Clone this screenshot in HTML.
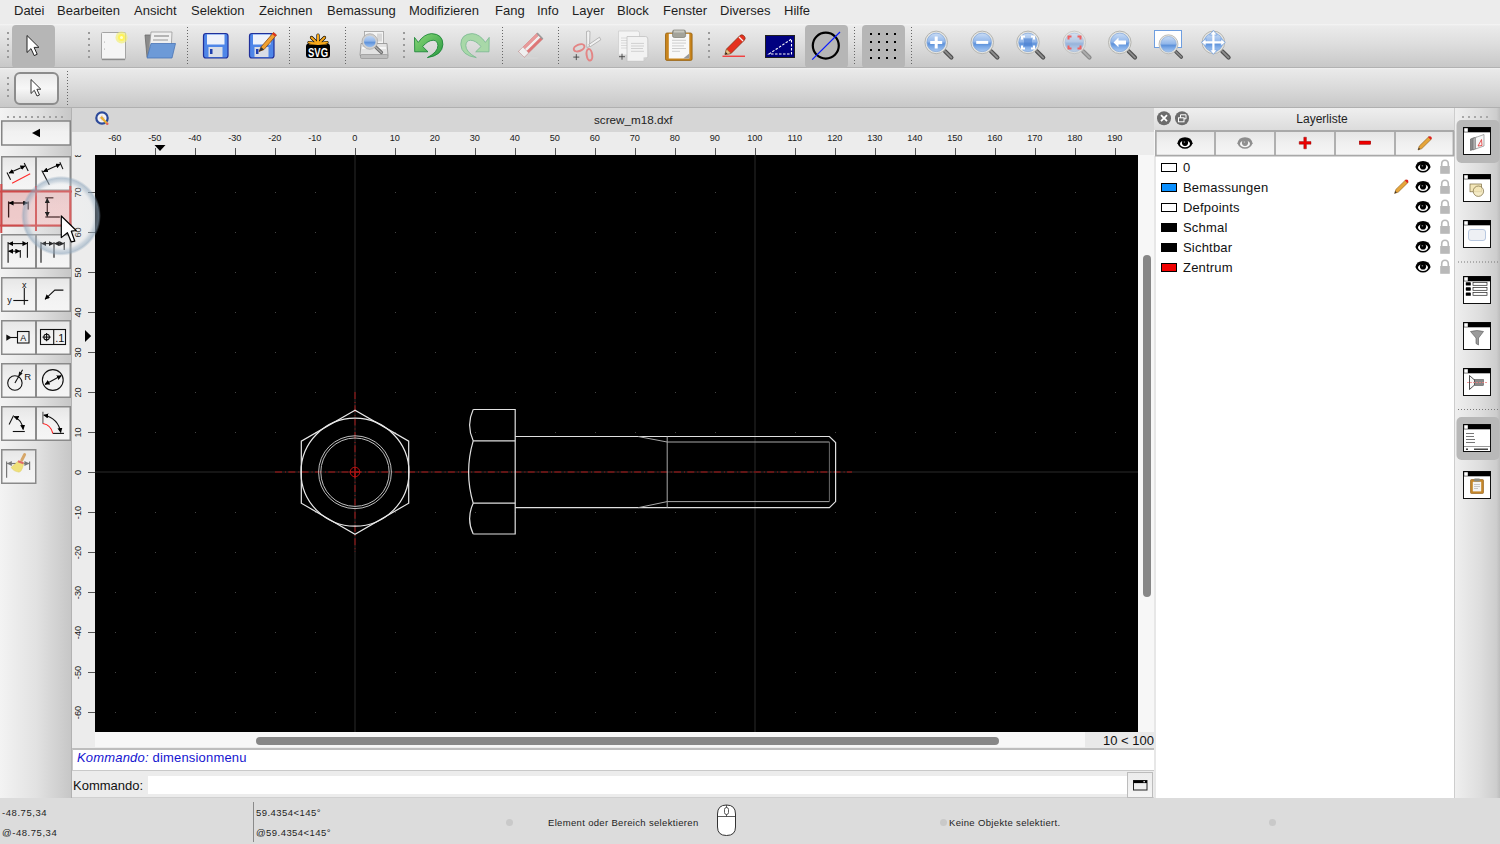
<!DOCTYPE html>
<html><head><meta charset="utf-8">
<style>
*{margin:0;padding:0;box-sizing:border-box}
html,body{width:1500px;height:844px;overflow:hidden;background:#ececec;font-family:"Liberation Sans",sans-serif;color:#222}
.a{position:absolute}
#menu{left:0;top:0;width:1500px;height:24px;background:#ececec}
#menu span{position:absolute;top:3px;font-size:13px;color:#1e1e1e;white-space:nowrap}
#tb1{left:0;top:24px;width:1500px;height:44px;background:linear-gradient(#f5f5f5 0,#ebebeb 2px,#dedede 45%,#c8c8c8);border-bottom:1px solid #b2b2b2}
#tb2{left:0;top:68px;width:1500px;height:40px;background:linear-gradient(#f2f2f2 0,#e9e9e9 2px,#dcdcdc 45%,#c8c8c8);border-bottom:1px solid #b0b0b0}
#lp{left:0;top:108px;width:72px;height:691px;background:linear-gradient(90deg,#f3f3f3,#dedede 60%,#c9c9c9);border-right:1px solid #b4b4b4}
#doctitle{left:72px;top:108px;width:1082px;height:24px;background:#d6d6d6;font-size:12px;text-align:center}
#hruler{left:72px;top:132px;width:1082px;height:23px;background:#ececec}
#vruler{left:72px;top:155px;width:23px;height:592px;background:#ececec}
#canvas{left:95px;top:155px;width:1043px;height:577px;background:#000;overflow:hidden}
#vscroll{left:1138px;top:155px;width:16px;height:577px;background:#f7f7f7}
#hscroll{left:95px;top:732px;width:990px;height:15px;background:#f7f7f7}
#zoomlbl{left:1085px;top:732px;width:69px;height:16px;background:#e9e9e9;font-size:13px;text-align:right;color:#111}
#cmdhist{left:72px;top:748px;width:1082px;height:23px;background:#fff;border:1px solid #c9c9c9;border-top:2px solid #bdbdbd;border-right:none}
#cmdin{left:72px;top:771px;width:1082px;height:28px;background:#ececec;border-bottom:2px solid #d0d0d0}
#layer{left:1154px;top:108px;width:301px;height:691px;background:#fff;border-left:1px solid #c9c9c9;border-right:1px solid #c9c9c9}
#dock{left:1455px;top:108px;width:45px;height:691px;background:linear-gradient(90deg,#eeeeee,#dcdcdc 60%,#c4c4c4)}
#status{left:0;top:798px;width:1500px;height:46px;background:#dcdcdc}
.st{position:absolute;font-size:9.5px;color:#1e1e1e;white-space:nowrap;letter-spacing:0.45px}
</style></head><body>
<div id="menu" class="a">
<span style="left:14px">Datei</span><span style="left:57px">Bearbeiten</span><span style="left:134px">Ansicht</span><span style="left:191px">Selektion</span><span style="left:259px">Zeichnen</span><span style="left:327px">Bemassung</span><span style="left:409px">Modifizieren</span><span style="left:495px">Fang</span><span style="left:537px">Info</span><span style="left:572px">Layer</span><span style="left:617px">Block</span><span style="left:663px">Fenster</span><span style="left:720px">Diverses</span><span style="left:784px">Hilfe</span>
</div>
<div id="tb1" class="a"></div>
<div id="tb2" class="a"></div>
<svg class="a" style="left:0;top:0" width="1500" height="108" viewBox="0 0 1500 108">
<defs>
<linearGradient id="gBlue" x1="0" y1="0" x2="0" y2="1"><stop offset="0" stop-color="#9cc0f0"/><stop offset="0.5" stop-color="#5a8fdc"/><stop offset="1" stop-color="#8ab4ec"/></linearGradient>
<linearGradient id="gMag" x1="0" y1="0" x2="0" y2="1"><stop offset="0" stop-color="#c9dcf5"/><stop offset="0.45" stop-color="#94b8ea"/><stop offset="0.58" stop-color="#5e92da"/><stop offset="0.72" stop-color="#7aa8e6"/><stop offset="1" stop-color="#a8c8f0"/></linearGradient>
<radialGradient id="gMagL" cx="0.5" cy="0.35" r="0.6"><stop offset="0" stop-color="#d6e3f5"/><stop offset="1" stop-color="#a9c3e8"/></radialGradient>
<linearGradient id="gGreen" x1="0" y1="0" x2="0" y2="1"><stop offset="0" stop-color="#6fd06f"/><stop offset="1" stop-color="#1f8f2f"/></linearGradient>
<linearGradient id="gBtn2" x1="0" y1="0" x2="0" y2="1"><stop offset="0" stop-color="#e9e9e9"/><stop offset="0.5" stop-color="#f7f7f7"/><stop offset="1" stop-color="#dadada"/></linearGradient>
<g id="mag">
 <ellipse cx="6" cy="13.5" rx="9" ry="2" fill="#cfcfcf" opacity="0.6"/>
 <path d="M8.8 8.8 L15.2 15.2" stroke="#505050" stroke-width="4.2" stroke-linecap="round"/>
 <path d="M8.8 8.8 L15.2 15.2" stroke="#8e8e8e" stroke-width="1.8" stroke-linecap="round"/>
 <circle cx="0" cy="0" r="11.3" fill="#e6e6e2" stroke="#b4b4b0" stroke-width="1"/>
 <circle cx="0" cy="0" r="9.3" fill="url(#gMag)" stroke="#7ea4d8" stroke-width="0.7"/>
</g>
<g id="grip"><rect x="0" y="0" width="2" height="2"/><rect x="0" y="6" width="2" height="2"/><rect x="0" y="12" width="2" height="2"/><rect x="0" y="18" width="2" height="2"/><rect x="0" y="24" width="2" height="2"/></g>
</defs>
<!-- grips -->
<g fill="#9a9a9a">
<use href="#grip" x="7" y="32"/>
<use href="#grip" x="88" y="32"/>
<use href="#grip" x="403" y="32"/>
<use href="#grip" x="708" y="32"/>
</g>
<g fill="#9a9a9a"><rect x="7" y="77" width="2" height="2"/><rect x="7" y="83" width="2" height="2"/><rect x="7" y="89" width="2" height="2"/><rect x="7" y="95" width="2" height="2"/></g>
<!-- dotted separators -->
<g stroke="#666" stroke-width="1" stroke-dasharray="1 2">
<line x1="187.5" y1="27" x2="187.5" y2="66"/>
<line x1="289.5" y1="27" x2="289.5" y2="66"/>
<line x1="345.5" y1="27" x2="345.5" y2="66"/>
<line x1="502.5" y1="27" x2="502.5" y2="66"/>
<line x1="558.5" y1="27" x2="558.5" y2="66"/>
<line x1="854.5" y1="27" x2="854.5" y2="66"/>
<line x1="911.5" y1="27" x2="911.5" y2="66"/>
<line x1="67.5" y1="71" x2="67.5" y2="105"/>
</g>
<!-- selected select button -->
<rect x="12" y="25" width="43" height="43" rx="4" fill="#b6b6b6"/>
<path d="M27 35.5 L27 52.5 L31 48.6 L34.2 55.6 L37.2 54.3 L34.1 47.4 L38.9 47.3 Z" fill="#fff" stroke="#222" stroke-width="1" stroke-linejoin="round"/>
<!-- tb2 select button -->
<rect x="15" y="73" width="43" height="31" rx="5" fill="url(#gBtn2)" stroke="#8c8c8c" stroke-width="2"/>
<path d="M31 79.5 L31 93.5 L34.3 90.3 L37 96 L39.5 95 L36.9 89.3 L40.8 89.2 Z" fill="#fff" stroke="#333" stroke-width="1" stroke-linejoin="round"/>
<!-- new doc -->
<rect x="101.5" y="32.5" width="24" height="27" rx="1" fill="#f5f5f5" stroke="#a4a4a4" stroke-width="1"/>
<rect x="102" y="58.6" width="23" height="1.6" fill="#8c8c8c"/>
<circle cx="104.5" cy="42" r="0.5" fill="#999"/><circle cx="104.5" cy="49" r="0.5" fill="#999"/>
<circle cx="121.5" cy="37.5" r="6" fill="#f2f07a" opacity="0.7"/>
<circle cx="121.5" cy="37.5" r="3.5" fill="#fff35a"/>
<circle cx="121.5" cy="37.5" r="1.5" fill="#ffffd0"/>
<!-- open folder -->
<path d="M145 35 L156 35 L158 37 L170 37 L170 57 L147 57 Z" fill="#8a8a8a" stroke="#6a6a6a" stroke-width="0.8"/>
<path d="M151 32 L172 32 L171 52 L149 52 Z" fill="#f0f0f0" stroke="#9a9a9a" stroke-width="0.8"/>
<rect x="154" y="35" width="15" height="2" fill="#b4b4b4"/>
<rect x="153" y="39" width="15" height="2" fill="#c4c4c4"/>
<path d="M151 43.5 L175.5 43.5 L172 58 L147 58 Z" fill="#6d9ad7" stroke="#4a75b5" stroke-width="0.8"/>
<!-- save -->
<rect x="203.5" y="33.5" width="24.5" height="24.5" rx="2.5" fill="#4f86e8" stroke="#1f2f9a" stroke-width="1.2"/>
<rect x="207" y="34.5" width="17.5" height="10" fill="#eef2fb"/>
<rect x="208.5" y="47" width="14" height="10" fill="#d9dde6"/>
<rect x="210" y="49" width="2.5" height="5" fill="#1f3fae"/>
<!-- save as -->
<rect x="249.5" y="33.5" width="24.5" height="24.5" rx="2.5" fill="#4f86e8" stroke="#1f2f9a" stroke-width="1.2"/>
<rect x="253" y="34.5" width="17.5" height="10" fill="#eef2fb"/>
<rect x="254.5" y="47" width="14" height="10" fill="#d9dde6"/>
<rect x="256" y="49" width="2.5" height="5" fill="#1f3fae"/>
<path d="M259 51.5 L261 47 L273.5 32.5 L276.5 35 L264 49.5 Z" fill="#f0a030" stroke="#8a4a10" stroke-width="0.8"/>
<path d="M272 34 L273.5 32.5 L276.5 35 L275 36.5 Z" fill="#e03020"/>
<path d="M259 51.5 L261 47 L264 49.5 Z" fill="#333"/>
<!-- SVG -->
<rect x="306" y="43.5" width="24" height="14.5" rx="3" fill="#000"/>
<g stroke="#000" stroke-width="3.2" stroke-linecap="round"><line x1="318" y1="44" x2="318" y2="35"/><line x1="318" y1="44" x2="311.5" y2="37.5"/><line x1="318" y1="44" x2="324.5" y2="37.5"/><line x1="318" y1="44" x2="309" y2="42.5"/><line x1="318" y1="44" x2="327" y2="42.5"/></g>
<g stroke="#f7a81b" stroke-width="2" stroke-linecap="round"><line x1="318" y1="44" x2="318" y2="35"/><line x1="318" y1="44" x2="311.5" y2="37.5"/><line x1="318" y1="44" x2="324.5" y2="37.5"/><line x1="318" y1="44" x2="309" y2="42.5"/><line x1="318" y1="44" x2="327" y2="42.5"/></g>
<path d="M308.5 44.5 Q318 39 327.5 44.5 Z" fill="#f7a81b"/>
<text x="318" y="56.6" font-family="Liberation Sans" font-weight="bold" font-size="12.5" fill="#fff" text-anchor="middle" textLength="20" lengthAdjust="spacingAndGlyphs">SVG</text>
<!-- print preview -->
<rect x="364.5" y="31.5" width="19" height="15" fill="#f4f4f4" stroke="#a0a0a0" stroke-width="0.8"/>
<rect x="377" y="33.5" width="5" height="8" fill="#d8d8d8"/>
<path d="M361 43.5 L387 43.5 L388 55.5 L360 55.5 Z" fill="#e2e2e2" stroke="#8e8e8e" stroke-width="0.8"/>
<rect x="362" y="47" width="24" height="2" fill="#f6f6f6"/>
<rect x="360.5" y="54.5" width="27.5" height="4" rx="1.2" fill="#bdbdbd" stroke="#8a8a8a" stroke-width="0.6"/>
<path d="M374 45.5 L381.5 52.5" stroke="#6a6a6a" stroke-width="3.2" stroke-linecap="round"/>
<path d="M374 45.5 L381.5 52.5" stroke="#a8a8a8" stroke-width="1.4" stroke-linecap="round"/>
<circle cx="369.8" cy="41.5" r="6.8" fill="url(#gMag)" stroke="#cfcfcf" stroke-width="2"/>
<circle cx="369.8" cy="41.5" r="7.8" fill="none" stroke="#9a9a9a" stroke-width="0.6"/>
<!-- undo -->
<linearGradient id="gUndo" x1="0" y1="0" x2="1" y2="1"><stop offset="0" stop-color="#8ad878"/><stop offset="1" stop-color="#2a9a40"/></linearGradient>
<path d="M414.5 37.4 L418.3 42.4 Q424 34 431.5 33.6 Q442.9 34 442.9 44.5 Q442.3 55.5 427.4 57.6 Q437.9 52 437.9 45.6 Q437.5 40.3 433.2 40.3 Q428 40.3 422.7 46.5 L428 51.8 L414.7 51.8 Z" fill="url(#gUndo)" stroke="#128030" stroke-width="0.8" stroke-linejoin="round"/>
<!-- redo -->
<path d="M 489.2 37.4 L 485.4 42.4 Q 479.7 34.0 472.2 33.6 Q 460.8 34.0 460.8 44.5 Q 461.4 55.5 476.3 57.6 Q 465.8 52.0 465.8 45.6 Q 466.2 40.3 470.5 40.3 Q 475.7 40.3 481.0 46.5 L 475.7 51.8 L 489.0 51.8 Z" fill="#a8d8a8" stroke="#78b890" stroke-width="0.8" stroke-linejoin="round"/>
<!-- eraser -->
<ellipse cx="529" cy="57.8" rx="10" ry="1.3" fill="#d4d4d4"/>
<g transform="translate(518.5 51.4) rotate(-44.5)">
<rect x="0" y="0" width="26" height="8.2" fill="#de7676" stroke="#c86a6a" stroke-width="0.4"/>
<rect x="6" y="0" width="20" height="2.6" fill="#e89a9a"/>
<rect x="6" y="2.8" width="20" height="2.6" fill="#f0efef"/>
<rect x="0" y="0" width="6.2" height="8.2" fill="#efefef" stroke="#b09090" stroke-width="0.5" stroke-dasharray="0.8 0.6"/>
<rect x="25.2" y="0" width="1.6" height="8.2" fill="#9a9a9a"/>
</g>
<!-- scissors -->
<path d="M586.5 31.5 Q588.5 30.5 590 31.5 L589.5 46.5 L586.8 47.5 Z" fill="#f2f2f2" stroke="#a0a0a0" stroke-width="0.7"/>
<path d="M599.5 37.2 L600.8 39.8 L590.5 46.5 L588.5 44.8 Z" fill="#f2f2f2" stroke="#a0a0a0" stroke-width="0.7"/>
<ellipse cx="579.1" cy="47.8" rx="5.6" ry="3.2" transform="rotate(-22 579.1 47.8)" fill="none" stroke="#e38585" stroke-width="2"/>
<ellipse cx="589.4" cy="54.8" rx="2.8" ry="5.8" transform="rotate(-8 589.4 54.8)" fill="none" stroke="#e38585" stroke-width="2"/>
<path d="M573.3 57.1 h6 M576.3 54.1 v6" stroke="#444" stroke-width="0.9"/>
<!-- copy -->
<path d="M618.5 31 L637.5 31 Q639.5 31 639.5 33 L639.5 55 L618.5 55 Z" fill="#f4f4f4" stroke="#cfcfcf" stroke-width="0.8"/>
<g stroke="#d6d6d6" stroke-width="0.9"><line x1="621" y1="38" x2="627" y2="38"/><line x1="621" y1="40.5" x2="627" y2="40.5"/><line x1="621" y1="43" x2="627" y2="43"/><line x1="621" y1="45.5" x2="627" y2="45.5"/><line x1="621" y1="48" x2="627" y2="48"/></g>
<path d="M627 36.5 L645.5 36.5 Q647.8 36.5 647.8 39 L647.8 57 L643.5 61.3 L627 61.3 Z" fill="#f2f2f2" stroke="#c2c2c2" stroke-width="0.8"/>
<path d="M643.5 61.3 L643.5 57.5 L647.8 57 Z" fill="#cfcfcf"/>
<g stroke="#d0d0d0" stroke-width="1"><line x1="631" y1="43.4" x2="644" y2="43.4"/><line x1="631" y1="46" x2="644" y2="46"/><line x1="631" y1="48.5" x2="643" y2="48.5"/><line x1="631" y1="51.3" x2="644" y2="51.3"/></g>
<path d="M619 56.7 h6 M622 53.7 v6" stroke="#444" stroke-width="0.9"/>
<!-- paste -->
<rect x="665.5" y="33" width="26.6" height="27.4" rx="1.5" fill="#c8841c" stroke="#94600e" stroke-width="0.8"/>
<rect x="668.8" y="33.8" width="20.5" height="24.7" fill="#f8f8f8"/>
<rect x="672.5" y="30" width="13.1" height="7.5" rx="1.8" fill="#a3a39a" stroke="#6e6e64" stroke-width="0.6"/>
<rect x="674" y="30.5" width="10" height="2" fill="#c8c8c0"/>
<g stroke="#c8c8c8" stroke-width="0.9"><line x1="672" y1="40.3" x2="686" y2="40.3"/><line x1="672" y1="43.1" x2="686" y2="43.1"/><line x1="672" y1="45.9" x2="684" y2="45.9"/><line x1="672" y1="48.5" x2="686" y2="48.5"/><line x1="672" y1="51.3" x2="680" y2="51.3"/></g>
<path d="M683.2 58.5 L689.3 58.5 L689.3 53.4 Z" fill="#9a9a9a"/>
<!-- pencil -->
<line x1="722.5" y1="56.2" x2="745" y2="56.2" stroke="#f00" stroke-width="1"/>
<path d="M725 54.5 L726.5 49 L740 35.5 Q742 34 743.5 35.5 L744.5 36.5 Q746 38 744.5 40 L731 53.5 Z" fill="#e5311f" stroke="#7a2a10" stroke-width="0.7"/>
<path d="M739 37 L743 41" stroke="#f4f4f4" stroke-width="1.2"/>
<path d="M725 54.5 L726.5 49 L731 53.5 Z" fill="#e9c48a" stroke="#7a5a20" stroke-width="0.5"/>
<path d="M725 54.5 L725.8 52 L727.5 53.7 Z" fill="#222"/>
<!-- blue rect -->
<rect x="765.5" y="35.5" width="29" height="22" fill="#000080" stroke="#202020" stroke-width="1"/>
<path d="M769 54 L791.5 39 L791.5 54 Z" fill="none" stroke="#fff" stroke-width="1.1" stroke-dasharray="2.5 1.5"/>
<!-- circle selected -->
<rect x="805" y="25" width="43" height="43" rx="4" fill="#b6b6b6"/>
<circle cx="825.8" cy="45.6" r="13" fill="none" stroke="#000" stroke-width="2.2"/>
<line x1="812.2" y1="59.6" x2="840" y2="32" stroke="#0a1aff" stroke-width="1.2"/>
<!-- grid selected -->
<rect x="862" y="25" width="43" height="43" rx="4" fill="#b6b6b6"/>
<g fill="#000">
<rect x="870" y="33" width="2" height="2"/><rect x="878" y="33" width="2" height="2"/><rect x="886" y="33" width="2" height="2"/><rect x="894" y="33" width="2" height="2"/>
<rect x="870" y="41" width="2" height="2"/><rect x="878" y="41" width="2" height="2"/><rect x="886" y="41" width="2" height="2"/><rect x="894" y="41" width="2" height="2"/>
<rect x="870" y="49" width="2" height="2"/><rect x="878" y="49" width="2" height="2"/><rect x="886" y="49" width="2" height="2"/><rect x="894" y="49" width="2" height="2"/>
<rect x="870" y="57" width="2" height="2"/><rect x="878" y="57" width="2" height="2"/><rect x="886" y="57" width="2" height="2"/><rect x="894" y="57" width="2" height="2"/>
</g>
<!-- zoom in -->
<use href="#mag" x="936.2" y="42.4"/>
<path d="M936.2 36.5 v12 M930.2 42.4 h12" stroke="#fff" stroke-width="3"/>
<!-- zoom out -->
<use href="#mag" x="982.2" y="42.4"/>
<path d="M976.2 42.4 h12" stroke="#fff" stroke-width="3"/>
<!-- zoom auto -->
<use href="#mag" x="1028" y="42.4"/>
<rect x="1024" y="38.4" width="8" height="8" fill="#4a7fd0" opacity="0.6"/><path d="M1022 39.5 v-3 h3 M1031 36.5 h3 v3 M1034 45.5 v3 h-3 M1025 48.5 h-3 v-3" fill="none" stroke="#fff" stroke-width="2"/>
<!-- zoom prev -->
<g opacity="0.55"><use href="#mag" x="1074.3" y="42.4"/></g>
<path d="M1068.5 39.5 v-3 h3 M1077.5 36.5 h3 v3 M1080.5 45.5 v3 h-3 M1071.5 48.5 h-3 v-3" fill="none" stroke="#f06060" stroke-width="2"/>
<!-- zoom back -->
<use href="#mag" x="1119.8" y="42.4"/>
<path d="M1113.5 42.4 L1118.5 37.5 L1118.5 40.4 L1126 40.4 L1126 44.4 L1118.5 44.4 L1118.5 47.3 Z" fill="#fff"/>
<!-- zoom window -->
<rect x="1154.5" y="30.5" width="27" height="17" fill="#fff" stroke="#6e9ee0" stroke-width="1"/>
<g transform="translate(1168.5 44.3) scale(0.84)"><use href="#mag"/></g>
<!-- pan -->
<use href="#mag" x="1213.4" y="42.4"/>
<path d="M1213.4 30.5 L1209.5 35 L1217.3 35 Z M1213.4 54.3 L1209.5 49.8 L1217.3 49.8 Z M1201.5 42.4 L1206 38.5 L1206 46.3 Z M1225.3 42.4 L1220.8 38.5 L1220.8 46.3 Z" fill="#fff" stroke="#6e9ee0" stroke-width="0.8"/>
<path d="M1213.4 34 v17 M1205 42.4 h17" stroke="#fff" stroke-width="2.2"/>
</svg>

<svg class="a" style="left:0;top:108px" width="72" height="691" viewBox="0 108 72 691">
<defs>
<linearGradient id="gLP" x1="0" y1="0" x2="1" y2="0"><stop offset="0" stop-color="#f3f3f3"/><stop offset="0.5" stop-color="#e2e2e2"/><stop offset="1" stop-color="#c6c6c6"/></linearGradient>
<linearGradient id="gLB" x1="0" y1="0" x2="0" y2="1"><stop offset="0" stop-color="#e6e6e6"/><stop offset="0.45" stop-color="#f1f1f1"/><stop offset="1" stop-color="#f5f5f5"/></linearGradient>
<marker id="ar" viewBox="0 0 6 6" refX="5.5" refY="3" markerWidth="5" markerHeight="5" orient="auto-start-reverse" markerUnits="userSpaceOnUse"><path d="M0 0 L6 3 L0 6 Z" fill="#000"/></marker>
<marker id="arG" viewBox="0 0 6 6" refX="5.5" refY="3" markerWidth="5" markerHeight="5" orient="auto-start-reverse" markerUnits="userSpaceOnUse"><path d="M0 0 L6 3 L0 6 Z" fill="#777"/></marker>
</defs>
<rect x="0" y="108" width="72" height="691" fill="url(#gLP)"/>
<rect x="71" y="108" width="1" height="691" fill="#b2b2b2"/>
<g fill="#a0a0a0">
<rect x="7" y="116" width="2" height="2"/><rect x="13" y="116" width="2" height="2"/><rect x="19" y="116" width="2" height="2"/><rect x="25" y="116" width="2" height="2"/><rect x="31" y="116" width="2" height="2"/><rect x="37" y="116" width="2" height="2"/><rect x="43" y="116" width="2" height="2"/><rect x="49" y="116" width="2" height="2"/><rect x="55" y="116" width="2" height="2"/><rect x="61" y="116" width="2" height="2"/>
</g>
<!-- back button -->
<rect x="1.75" y="121" width="68.5" height="24" fill="url(#gLB)" stroke="#858585" stroke-width="1.5"/>
<path d="M32 133 L40 128.8 L40 137.2 Z" fill="#000"/>
<!-- buttons -->
<g fill="url(#gLB)" stroke="#8a8a8a" stroke-width="1.5">
<rect x="1.75" y="156.75" width="34" height="33.5"/><rect x="36.25" y="156.75" width="34" height="33.5"/>
<rect x="1.75" y="190.75" width="34" height="35"/><rect x="36.25" y="190.75" width="34" height="35"/>
<rect x="1.75" y="234.75" width="34" height="33.5"/><rect x="36.25" y="234.75" width="34" height="33.5"/>
<rect x="1.75" y="277.75" width="34" height="33.5"/><rect x="36.25" y="277.75" width="34" height="33.5"/>
<rect x="1.75" y="320.75" width="34" height="33.5"/><rect x="36.25" y="320.75" width="34" height="33.5"/>
<rect x="1.75" y="363.75" width="34" height="33.5"/><rect x="36.25" y="363.75" width="34" height="33.5"/>
<rect x="1.75" y="406.75" width="34" height="33.5"/><rect x="36.25" y="406.75" width="34" height="33.5"/>
<rect x="1.75" y="449.75" width="34" height="33.5"/>
</g>
<!-- highlighted row overlay -->
<rect x="0" y="190.5" width="72" height="36" fill="#e88a8a" opacity="0.38"/>
<g stroke="#cf4a4a" stroke-width="2" fill="none">
<line x1="0" y1="191.5" x2="72" y2="191.5"/><line x1="0" y1="225.5" x2="72" y2="225.5"/>
<line x1="36" y1="186" x2="36" y2="231"/><line x1="70.3" y1="186" x2="70.3" y2="231"/><line x1="1.3" y1="184" x2="1.3" y2="233"/>
</g>
<!-- icons -->
<g stroke="#111" stroke-width="1.1" fill="none">
<!-- row1 btn1 aligned -->
<line x1="9" y1="173" x2="25" y2="166" marker-start="url(#ar)" marker-end="url(#ar)"/>
<line x1="7" y1="172.5" x2="10.6" y2="179.7"/><line x1="24.2" y1="163.1" x2="28.2" y2="171.1"/>
<!-- row1 btn2 -->
<line x1="43.3" y1="171.7" x2="60.4" y2="164.1" marker-start="url(#ar)" marker-end="url(#ar)"/>
<line x1="41.8" y1="170.6" x2="49.3" y2="184.7"/><line x1="59.9" y1="162.1" x2="62.9" y2="169.1"/>
</g>
<line x1="12.1" y1="183.2" x2="30.2" y2="173.7" stroke="#ff2a2a" stroke-width="1.1"/>
<g stroke="#3a1a1a" stroke-width="1.3" fill="none">
<!-- row2 btn1 horizontal -->
<line x1="8.6" y1="201.4" x2="8.6" y2="217.5"/><line x1="28.2" y1="201.4" x2="28.2" y2="209.4"/>
<line x1="9" y1="203" x2="27.8" y2="203" marker-start="url(#ar)" marker-end="url(#ar)"/>
<!-- row2 btn2 vertical -->
<line x1="45.3" y1="197.8" x2="53.4" y2="197.8"/><line x1="45.3" y1="217" x2="59.9" y2="217"/>
<line x1="47.3" y1="198.3" x2="47.3" y2="216.5" marker-start="url(#ar)" marker-end="url(#ar)"/>
</g>
<g stroke="#111" stroke-width="1.1" fill="none">
<!-- row3 btn1 baseline -->
<line x1="8.1" y1="242" x2="8.1" y2="262.7"/><line x1="27.4" y1="242" x2="27.4" y2="257.7"/><line x1="20.3" y1="250" x2="20.3" y2="257.7"/>
<line x1="8.5" y1="243.6" x2="27" y2="243.6" marker-start="url(#ar)" marker-end="url(#ar)"/>
<line x1="8.5" y1="251.2" x2="19.9" y2="251.2" marker-start="url(#ar)" marker-end="url(#ar)"/>
<!-- row3 btn2 continue -->
<line x1="41" y1="242" x2="41" y2="262.7"/><line x1="54" y1="242" x2="54" y2="257.7"/><line x1="64.2" y1="242" x2="64.2" y2="250"/>
<line x1="41.5" y1="243.6" x2="53.5" y2="243.6" marker-start="url(#ar)" marker-end="url(#ar)"/>
<line x1="54.5" y1="243.6" x2="63.8" y2="243.6" marker-start="url(#ar)" marker-end="url(#ar)"/>
<!-- row4 btn1 ordinate -->
<line x1="24.3" y1="288" x2="24.3" y2="304.7"/><line x1="13.3" y1="300.5" x2="28.2" y2="300.5"/>
<!-- row4 btn2 leader -->
<polyline points="63.4,290.1 54.8,290.1 45,299.3" marker-end="url(#ar)"/>
<!-- row5 btn1 -->
<line x1="11" y1="337.5" x2="17.2" y2="337.5"/>
<rect x="17.5" y="331.5" width="11.5" height="11.5"/>
<!-- row5 btn2 -->
<rect x="40.5" y="329.5" width="25" height="15"/><line x1="53.7" y1="329.5" x2="53.7" y2="344.5"/>
<circle cx="46.6" cy="337.1" r="2.8"/><line x1="42.5" y1="337.1" x2="50.7" y2="337.1"/><line x1="46.6" y1="333" x2="46.6" y2="341.2"/>
<!-- row6 btn1 radius -->
<circle cx="14.9" cy="383" r="7.2"/>
<line x1="14.9" y1="383" x2="22.6" y2="369.8"/>
<!-- row6 btn2 diameter -->
<circle cx="52.8" cy="380" r="10.4"/>
<line x1="45" y1="384.4" x2="61.4" y2="375.6" marker-start="url(#ar)" marker-end="url(#ar)"/>
<!-- row7 btn1 angular -->
<line x1="9.1" y1="424.6" x2="13.6" y2="415.5"/><line x1="12.8" y1="431.5" x2="24.8" y2="431.5"/>
<path d="M14 416.5 Q22 420 23.2 429.5" marker-start="url(#ar)" marker-end="url(#ar)"/>
<!-- row7 btn2 arc length -->
<path d="M43.6 415 Q58 418 60.8 432.5" marker-start="url(#ar)" marker-end="url(#ar)"/>
<line x1="52.8" y1="433.4" x2="64" y2="433.4"/>
</g>
<line x1="42.9" y1="411.8" x2="42.9" y2="423.8" stroke="#666" stroke-width="1.2"/>
<path d="M42.9 423.5 Q51 425 52.8 433.4" stroke="#ff2020" stroke-width="1.2" fill="none"/>
<path d="M6.3 334.4 L11.7 337.5 L6.3 340.7 Z" fill="#111"/>
<text x="23.3" y="341" font-family="Liberation Sans" font-size="9" fill="#111" text-anchor="middle">A</text>
<text x="59.8" y="342" font-family="Liberation Sans" font-size="11" fill="#111" text-anchor="middle">.1</text>
<text x="24.3" y="287.5" font-family="Liberation Sans" font-size="9" fill="#111" text-anchor="middle">x</text>
<text x="9.4" y="302.5" font-family="Liberation Sans" font-size="9" fill="#111" text-anchor="middle">y</text>
<path d="M18.2 377.2 L19.2 371.6 L22.6 373.6 Z" fill="#111"/>
<text x="27.6" y="379.5" font-family="Liberation Sans" font-size="9.5" fill="#111" text-anchor="middle">R</text>
<!-- row8 broom -->
<g stroke="#777" stroke-width="1.2" fill="none">
<line x1="6.6" y1="461.5" x2="6.6" y2="477.8"/><line x1="29.6" y1="461.5" x2="29.6" y2="470"/>
<line x1="7.2" y1="463.5" x2="29" y2="463.5" marker-start="url(#arG)" marker-end="url(#arG)"/>
</g>
<path d="M24.6 454.6 L21.8 460.1" stroke="#d6a668" stroke-width="3" stroke-linecap="round"/>
<path d="M17.9 460.9 L23.8 462.9 Q23 468 21 471 Q19.5 472.5 18.1 472 Q15.5 471.5 14.1 470.6 Q12 469 11.1 467.3 Q15 464.5 17.9 460.9 Z" fill="#efe07a" stroke="#d8c860" stroke-width="0.4"/>
<path d="M18.1 461.3 L23.4 463.3" stroke="#e06a6a" stroke-width="2"/>
</svg>

<div id="doctitle" class="a"><span style="position:absolute;left:522px;top:4.8px;font-size:11.7px;color:#222">screw_m18.dxf</span></div>
<svg class="a" style="left:95px;top:111px" width="16" height="16" viewBox="0 0 16 16"><circle cx="7" cy="7" r="5.7" fill="#f4f4f4" stroke="#2d4a9a" stroke-width="2.2"/><path d="M4.5 7 h5 M7 4.5 v5" stroke="#d08080" stroke-width="0.6"/><path d="M6.5 6.5 L12 12.5" stroke="#e8b030" stroke-width="2.2" stroke-linecap="round"/><circle cx="12.3" cy="12.8" r="1.2" fill="#e06060"/></svg>
<div id="hruler" class="a"></div>
<div id="vruler" class="a"></div>
<svg class="a" style="left:72px;top:132px" width="1066" height="23" viewBox="72 132 1066 23">
<line x1="115.5" y1="148" x2="115.5" y2="155" stroke="#555" stroke-width="1"/>
<text x="114.8" y="141" font-family="Liberation Sans" font-size="9.2" fill="#1a1a1a" text-anchor="middle">-60</text>
<line x1="155.5" y1="148" x2="155.5" y2="155" stroke="#555" stroke-width="1"/>
<text x="154.8" y="141" font-family="Liberation Sans" font-size="9.2" fill="#1a1a1a" text-anchor="middle">-50</text>
<line x1="195.5" y1="148" x2="195.5" y2="155" stroke="#555" stroke-width="1"/>
<text x="194.8" y="141" font-family="Liberation Sans" font-size="9.2" fill="#1a1a1a" text-anchor="middle">-40</text>
<line x1="235.5" y1="148" x2="235.5" y2="155" stroke="#555" stroke-width="1"/>
<text x="234.8" y="141" font-family="Liberation Sans" font-size="9.2" fill="#1a1a1a" text-anchor="middle">-30</text>
<line x1="275.5" y1="148" x2="275.5" y2="155" stroke="#555" stroke-width="1"/>
<text x="274.8" y="141" font-family="Liberation Sans" font-size="9.2" fill="#1a1a1a" text-anchor="middle">-20</text>
<line x1="315.5" y1="148" x2="315.5" y2="155" stroke="#555" stroke-width="1"/>
<text x="314.8" y="141" font-family="Liberation Sans" font-size="9.2" fill="#1a1a1a" text-anchor="middle">-10</text>
<line x1="355.5" y1="148" x2="355.5" y2="155" stroke="#555" stroke-width="1"/>
<text x="354.8" y="141" font-family="Liberation Sans" font-size="9.2" fill="#1a1a1a" text-anchor="middle">0</text>
<line x1="395.5" y1="148" x2="395.5" y2="155" stroke="#555" stroke-width="1"/>
<text x="394.8" y="141" font-family="Liberation Sans" font-size="9.2" fill="#1a1a1a" text-anchor="middle">10</text>
<line x1="435.5" y1="148" x2="435.5" y2="155" stroke="#555" stroke-width="1"/>
<text x="434.8" y="141" font-family="Liberation Sans" font-size="9.2" fill="#1a1a1a" text-anchor="middle">20</text>
<line x1="475.5" y1="148" x2="475.5" y2="155" stroke="#555" stroke-width="1"/>
<text x="474.8" y="141" font-family="Liberation Sans" font-size="9.2" fill="#1a1a1a" text-anchor="middle">30</text>
<line x1="515.5" y1="148" x2="515.5" y2="155" stroke="#555" stroke-width="1"/>
<text x="514.8" y="141" font-family="Liberation Sans" font-size="9.2" fill="#1a1a1a" text-anchor="middle">40</text>
<line x1="555.5" y1="148" x2="555.5" y2="155" stroke="#555" stroke-width="1"/>
<text x="554.8" y="141" font-family="Liberation Sans" font-size="9.2" fill="#1a1a1a" text-anchor="middle">50</text>
<line x1="595.5" y1="148" x2="595.5" y2="155" stroke="#555" stroke-width="1"/>
<text x="594.8" y="141" font-family="Liberation Sans" font-size="9.2" fill="#1a1a1a" text-anchor="middle">60</text>
<line x1="635.5" y1="148" x2="635.5" y2="155" stroke="#555" stroke-width="1"/>
<text x="634.8" y="141" font-family="Liberation Sans" font-size="9.2" fill="#1a1a1a" text-anchor="middle">70</text>
<line x1="675.5" y1="148" x2="675.5" y2="155" stroke="#555" stroke-width="1"/>
<text x="674.8" y="141" font-family="Liberation Sans" font-size="9.2" fill="#1a1a1a" text-anchor="middle">80</text>
<line x1="715.5" y1="148" x2="715.5" y2="155" stroke="#555" stroke-width="1"/>
<text x="714.8" y="141" font-family="Liberation Sans" font-size="9.2" fill="#1a1a1a" text-anchor="middle">90</text>
<line x1="755.5" y1="148" x2="755.5" y2="155" stroke="#555" stroke-width="1"/>
<text x="754.8" y="141" font-family="Liberation Sans" font-size="9.2" fill="#1a1a1a" text-anchor="middle">100</text>
<line x1="795.5" y1="148" x2="795.5" y2="155" stroke="#555" stroke-width="1"/>
<text x="794.8" y="141" font-family="Liberation Sans" font-size="9.2" fill="#1a1a1a" text-anchor="middle">110</text>
<line x1="835.5" y1="148" x2="835.5" y2="155" stroke="#555" stroke-width="1"/>
<text x="834.8" y="141" font-family="Liberation Sans" font-size="9.2" fill="#1a1a1a" text-anchor="middle">120</text>
<line x1="875.5" y1="148" x2="875.5" y2="155" stroke="#555" stroke-width="1"/>
<text x="874.8" y="141" font-family="Liberation Sans" font-size="9.2" fill="#1a1a1a" text-anchor="middle">130</text>
<line x1="915.5" y1="148" x2="915.5" y2="155" stroke="#555" stroke-width="1"/>
<text x="914.8" y="141" font-family="Liberation Sans" font-size="9.2" fill="#1a1a1a" text-anchor="middle">140</text>
<line x1="955.5" y1="148" x2="955.5" y2="155" stroke="#555" stroke-width="1"/>
<text x="954.8" y="141" font-family="Liberation Sans" font-size="9.2" fill="#1a1a1a" text-anchor="middle">150</text>
<line x1="995.5" y1="148" x2="995.5" y2="155" stroke="#555" stroke-width="1"/>
<text x="994.8" y="141" font-family="Liberation Sans" font-size="9.2" fill="#1a1a1a" text-anchor="middle">160</text>
<line x1="1035.5" y1="148" x2="1035.5" y2="155" stroke="#555" stroke-width="1"/>
<text x="1034.8" y="141" font-family="Liberation Sans" font-size="9.2" fill="#1a1a1a" text-anchor="middle">170</text>
<line x1="1075.5" y1="148" x2="1075.5" y2="155" stroke="#555" stroke-width="1"/>
<text x="1074.8" y="141" font-family="Liberation Sans" font-size="9.2" fill="#1a1a1a" text-anchor="middle">180</text>
<line x1="1115.5" y1="148" x2="1115.5" y2="155" stroke="#555" stroke-width="1"/>
<text x="1114.8" y="141" font-family="Liberation Sans" font-size="9.2" fill="#1a1a1a" text-anchor="middle">190</text>
<path d="M154.5 145 L165.5 145 L160 151 Z" fill="#000"/>
</svg>
<svg class="a" style="left:72px;top:155px" width="23" height="592" viewBox="72 155 23 592">
<line x1="88" y1="752.5" x2="95" y2="752.5" stroke="#555" stroke-width="1"/>
<line x1="88" y1="712.5" x2="95" y2="712.5" stroke="#555" stroke-width="1"/>
<text transform="translate(80.7 712.5) rotate(-90)" x="0" y="0" font-family="Liberation Sans" font-size="9.2" fill="#1a1a1a" text-anchor="middle">-60</text>
<line x1="88" y1="672.5" x2="95" y2="672.5" stroke="#555" stroke-width="1"/>
<text transform="translate(80.7 672.5) rotate(-90)" x="0" y="0" font-family="Liberation Sans" font-size="9.2" fill="#1a1a1a" text-anchor="middle">-50</text>
<line x1="88" y1="632.5" x2="95" y2="632.5" stroke="#555" stroke-width="1"/>
<text transform="translate(80.7 632.5) rotate(-90)" x="0" y="0" font-family="Liberation Sans" font-size="9.2" fill="#1a1a1a" text-anchor="middle">-40</text>
<line x1="88" y1="592.5" x2="95" y2="592.5" stroke="#555" stroke-width="1"/>
<text transform="translate(80.7 592.5) rotate(-90)" x="0" y="0" font-family="Liberation Sans" font-size="9.2" fill="#1a1a1a" text-anchor="middle">-30</text>
<line x1="88" y1="552.5" x2="95" y2="552.5" stroke="#555" stroke-width="1"/>
<text transform="translate(80.7 552.5) rotate(-90)" x="0" y="0" font-family="Liberation Sans" font-size="9.2" fill="#1a1a1a" text-anchor="middle">-20</text>
<line x1="88" y1="512.5" x2="95" y2="512.5" stroke="#555" stroke-width="1"/>
<text transform="translate(80.7 512.5) rotate(-90)" x="0" y="0" font-family="Liberation Sans" font-size="9.2" fill="#1a1a1a" text-anchor="middle">-10</text>
<line x1="88" y1="472.5" x2="95" y2="472.5" stroke="#555" stroke-width="1"/>
<text transform="translate(80.7 472.5) rotate(-90)" x="0" y="0" font-family="Liberation Sans" font-size="9.2" fill="#1a1a1a" text-anchor="middle">0</text>
<line x1="88" y1="432.5" x2="95" y2="432.5" stroke="#555" stroke-width="1"/>
<text transform="translate(80.7 432.5) rotate(-90)" x="0" y="0" font-family="Liberation Sans" font-size="9.2" fill="#1a1a1a" text-anchor="middle">10</text>
<line x1="88" y1="392.5" x2="95" y2="392.5" stroke="#555" stroke-width="1"/>
<text transform="translate(80.7 392.5) rotate(-90)" x="0" y="0" font-family="Liberation Sans" font-size="9.2" fill="#1a1a1a" text-anchor="middle">20</text>
<line x1="88" y1="352.5" x2="95" y2="352.5" stroke="#555" stroke-width="1"/>
<text transform="translate(80.7 352.5) rotate(-90)" x="0" y="0" font-family="Liberation Sans" font-size="9.2" fill="#1a1a1a" text-anchor="middle">30</text>
<line x1="88" y1="312.5" x2="95" y2="312.5" stroke="#555" stroke-width="1"/>
<text transform="translate(80.7 312.5) rotate(-90)" x="0" y="0" font-family="Liberation Sans" font-size="9.2" fill="#1a1a1a" text-anchor="middle">40</text>
<line x1="88" y1="272.5" x2="95" y2="272.5" stroke="#555" stroke-width="1"/>
<text transform="translate(80.7 272.5) rotate(-90)" x="0" y="0" font-family="Liberation Sans" font-size="9.2" fill="#1a1a1a" text-anchor="middle">50</text>
<line x1="88" y1="232.5" x2="95" y2="232.5" stroke="#555" stroke-width="1"/>
<text transform="translate(80.7 232.5) rotate(-90)" x="0" y="0" font-family="Liberation Sans" font-size="9.2" fill="#1a1a1a" text-anchor="middle">60</text>
<line x1="88" y1="192.5" x2="95" y2="192.5" stroke="#555" stroke-width="1"/>
<text transform="translate(80.7 192.5) rotate(-90)" x="0" y="0" font-family="Liberation Sans" font-size="9.2" fill="#1a1a1a" text-anchor="middle">70</text>
<line x1="88" y1="152.5" x2="95" y2="152.5" stroke="#555" stroke-width="1"/>
<text transform="translate(80.7 152.5) rotate(-90)" x="0" y="0" font-family="Liberation Sans" font-size="9.2" fill="#1a1a1a" text-anchor="middle">80</text>
<path d="M85 330 L85 342 L91.2 336 Z" fill="#000"/>
</svg>
<svg class="a" style="left:95px;top:155px" width="1043" height="577" viewBox="95 155 1043 577">
<rect x="95" y="155" width="1043" height="577" fill="#000"/>
<path d="M115 192h1v1h-1zM115 232h1v1h-1zM115 272h1v1h-1zM115 312h1v1h-1zM115 352h1v1h-1zM115 392h1v1h-1zM115 432h1v1h-1zM115 472h1v1h-1zM115 512h1v1h-1zM115 552h1v1h-1zM115 592h1v1h-1zM115 632h1v1h-1zM115 672h1v1h-1zM115 712h1v1h-1zM155 192h1v1h-1zM155 232h1v1h-1zM155 272h1v1h-1zM155 312h1v1h-1zM155 352h1v1h-1zM155 392h1v1h-1zM155 432h1v1h-1zM155 472h1v1h-1zM155 512h1v1h-1zM155 552h1v1h-1zM155 592h1v1h-1zM155 632h1v1h-1zM155 672h1v1h-1zM155 712h1v1h-1zM195 192h1v1h-1zM195 232h1v1h-1zM195 272h1v1h-1zM195 312h1v1h-1zM195 352h1v1h-1zM195 392h1v1h-1zM195 432h1v1h-1zM195 472h1v1h-1zM195 512h1v1h-1zM195 552h1v1h-1zM195 592h1v1h-1zM195 632h1v1h-1zM195 672h1v1h-1zM195 712h1v1h-1zM235 192h1v1h-1zM235 232h1v1h-1zM235 272h1v1h-1zM235 312h1v1h-1zM235 352h1v1h-1zM235 392h1v1h-1zM235 432h1v1h-1zM235 472h1v1h-1zM235 512h1v1h-1zM235 552h1v1h-1zM235 592h1v1h-1zM235 632h1v1h-1zM235 672h1v1h-1zM235 712h1v1h-1zM275 192h1v1h-1zM275 232h1v1h-1zM275 272h1v1h-1zM275 312h1v1h-1zM275 352h1v1h-1zM275 392h1v1h-1zM275 432h1v1h-1zM275 472h1v1h-1zM275 512h1v1h-1zM275 552h1v1h-1zM275 592h1v1h-1zM275 632h1v1h-1zM275 672h1v1h-1zM275 712h1v1h-1zM315 192h1v1h-1zM315 232h1v1h-1zM315 272h1v1h-1zM315 312h1v1h-1zM315 352h1v1h-1zM315 392h1v1h-1zM315 432h1v1h-1zM315 472h1v1h-1zM315 512h1v1h-1zM315 552h1v1h-1zM315 592h1v1h-1zM315 632h1v1h-1zM315 672h1v1h-1zM315 712h1v1h-1zM355 192h1v1h-1zM355 232h1v1h-1zM355 272h1v1h-1zM355 312h1v1h-1zM355 352h1v1h-1zM355 392h1v1h-1zM355 432h1v1h-1zM355 472h1v1h-1zM355 512h1v1h-1zM355 552h1v1h-1zM355 592h1v1h-1zM355 632h1v1h-1zM355 672h1v1h-1zM355 712h1v1h-1zM395 192h1v1h-1zM395 232h1v1h-1zM395 272h1v1h-1zM395 312h1v1h-1zM395 352h1v1h-1zM395 392h1v1h-1zM395 432h1v1h-1zM395 472h1v1h-1zM395 512h1v1h-1zM395 552h1v1h-1zM395 592h1v1h-1zM395 632h1v1h-1zM395 672h1v1h-1zM395 712h1v1h-1zM435 192h1v1h-1zM435 232h1v1h-1zM435 272h1v1h-1zM435 312h1v1h-1zM435 352h1v1h-1zM435 392h1v1h-1zM435 432h1v1h-1zM435 472h1v1h-1zM435 512h1v1h-1zM435 552h1v1h-1zM435 592h1v1h-1zM435 632h1v1h-1zM435 672h1v1h-1zM435 712h1v1h-1zM475 192h1v1h-1zM475 232h1v1h-1zM475 272h1v1h-1zM475 312h1v1h-1zM475 352h1v1h-1zM475 392h1v1h-1zM475 432h1v1h-1zM475 472h1v1h-1zM475 512h1v1h-1zM475 552h1v1h-1zM475 592h1v1h-1zM475 632h1v1h-1zM475 672h1v1h-1zM475 712h1v1h-1zM515 192h1v1h-1zM515 232h1v1h-1zM515 272h1v1h-1zM515 312h1v1h-1zM515 352h1v1h-1zM515 392h1v1h-1zM515 432h1v1h-1zM515 472h1v1h-1zM515 512h1v1h-1zM515 552h1v1h-1zM515 592h1v1h-1zM515 632h1v1h-1zM515 672h1v1h-1zM515 712h1v1h-1zM555 192h1v1h-1zM555 232h1v1h-1zM555 272h1v1h-1zM555 312h1v1h-1zM555 352h1v1h-1zM555 392h1v1h-1zM555 432h1v1h-1zM555 472h1v1h-1zM555 512h1v1h-1zM555 552h1v1h-1zM555 592h1v1h-1zM555 632h1v1h-1zM555 672h1v1h-1zM555 712h1v1h-1zM595 192h1v1h-1zM595 232h1v1h-1zM595 272h1v1h-1zM595 312h1v1h-1zM595 352h1v1h-1zM595 392h1v1h-1zM595 432h1v1h-1zM595 472h1v1h-1zM595 512h1v1h-1zM595 552h1v1h-1zM595 592h1v1h-1zM595 632h1v1h-1zM595 672h1v1h-1zM595 712h1v1h-1zM635 192h1v1h-1zM635 232h1v1h-1zM635 272h1v1h-1zM635 312h1v1h-1zM635 352h1v1h-1zM635 392h1v1h-1zM635 432h1v1h-1zM635 472h1v1h-1zM635 512h1v1h-1zM635 552h1v1h-1zM635 592h1v1h-1zM635 632h1v1h-1zM635 672h1v1h-1zM635 712h1v1h-1zM675 192h1v1h-1zM675 232h1v1h-1zM675 272h1v1h-1zM675 312h1v1h-1zM675 352h1v1h-1zM675 392h1v1h-1zM675 432h1v1h-1zM675 472h1v1h-1zM675 512h1v1h-1zM675 552h1v1h-1zM675 592h1v1h-1zM675 632h1v1h-1zM675 672h1v1h-1zM675 712h1v1h-1zM715 192h1v1h-1zM715 232h1v1h-1zM715 272h1v1h-1zM715 312h1v1h-1zM715 352h1v1h-1zM715 392h1v1h-1zM715 432h1v1h-1zM715 472h1v1h-1zM715 512h1v1h-1zM715 552h1v1h-1zM715 592h1v1h-1zM715 632h1v1h-1zM715 672h1v1h-1zM715 712h1v1h-1zM755 192h1v1h-1zM755 232h1v1h-1zM755 272h1v1h-1zM755 312h1v1h-1zM755 352h1v1h-1zM755 392h1v1h-1zM755 432h1v1h-1zM755 472h1v1h-1zM755 512h1v1h-1zM755 552h1v1h-1zM755 592h1v1h-1zM755 632h1v1h-1zM755 672h1v1h-1zM755 712h1v1h-1zM795 192h1v1h-1zM795 232h1v1h-1zM795 272h1v1h-1zM795 312h1v1h-1zM795 352h1v1h-1zM795 392h1v1h-1zM795 432h1v1h-1zM795 472h1v1h-1zM795 512h1v1h-1zM795 552h1v1h-1zM795 592h1v1h-1zM795 632h1v1h-1zM795 672h1v1h-1zM795 712h1v1h-1zM835 192h1v1h-1zM835 232h1v1h-1zM835 272h1v1h-1zM835 312h1v1h-1zM835 352h1v1h-1zM835 392h1v1h-1zM835 432h1v1h-1zM835 472h1v1h-1zM835 512h1v1h-1zM835 552h1v1h-1zM835 592h1v1h-1zM835 632h1v1h-1zM835 672h1v1h-1zM835 712h1v1h-1zM875 192h1v1h-1zM875 232h1v1h-1zM875 272h1v1h-1zM875 312h1v1h-1zM875 352h1v1h-1zM875 392h1v1h-1zM875 432h1v1h-1zM875 472h1v1h-1zM875 512h1v1h-1zM875 552h1v1h-1zM875 592h1v1h-1zM875 632h1v1h-1zM875 672h1v1h-1zM875 712h1v1h-1zM915 192h1v1h-1zM915 232h1v1h-1zM915 272h1v1h-1zM915 312h1v1h-1zM915 352h1v1h-1zM915 392h1v1h-1zM915 432h1v1h-1zM915 472h1v1h-1zM915 512h1v1h-1zM915 552h1v1h-1zM915 592h1v1h-1zM915 632h1v1h-1zM915 672h1v1h-1zM915 712h1v1h-1zM955 192h1v1h-1zM955 232h1v1h-1zM955 272h1v1h-1zM955 312h1v1h-1zM955 352h1v1h-1zM955 392h1v1h-1zM955 432h1v1h-1zM955 472h1v1h-1zM955 512h1v1h-1zM955 552h1v1h-1zM955 592h1v1h-1zM955 632h1v1h-1zM955 672h1v1h-1zM955 712h1v1h-1zM995 192h1v1h-1zM995 232h1v1h-1zM995 272h1v1h-1zM995 312h1v1h-1zM995 352h1v1h-1zM995 392h1v1h-1zM995 432h1v1h-1zM995 472h1v1h-1zM995 512h1v1h-1zM995 552h1v1h-1zM995 592h1v1h-1zM995 632h1v1h-1zM995 672h1v1h-1zM995 712h1v1h-1zM1035 192h1v1h-1zM1035 232h1v1h-1zM1035 272h1v1h-1zM1035 312h1v1h-1zM1035 352h1v1h-1zM1035 392h1v1h-1zM1035 432h1v1h-1zM1035 472h1v1h-1zM1035 512h1v1h-1zM1035 552h1v1h-1zM1035 592h1v1h-1zM1035 632h1v1h-1zM1035 672h1v1h-1zM1035 712h1v1h-1zM1075 192h1v1h-1zM1075 232h1v1h-1zM1075 272h1v1h-1zM1075 312h1v1h-1zM1075 352h1v1h-1zM1075 392h1v1h-1zM1075 432h1v1h-1zM1075 472h1v1h-1zM1075 512h1v1h-1zM1075 552h1v1h-1zM1075 592h1v1h-1zM1075 632h1v1h-1zM1075 672h1v1h-1zM1075 712h1v1h-1zM1115 192h1v1h-1zM1115 232h1v1h-1zM1115 272h1v1h-1zM1115 312h1v1h-1zM1115 352h1v1h-1zM1115 392h1v1h-1zM1115 432h1v1h-1zM1115 472h1v1h-1zM1115 512h1v1h-1zM1115 552h1v1h-1zM1115 592h1v1h-1zM1115 632h1v1h-1zM1115 672h1v1h-1zM1115 712h1v1h-1z" fill="#424242"/>
<g stroke="#151515" stroke-width="2"><line x1="355" y1="155" x2="355" y2="732"/><line x1="755" y1="155" x2="755" y2="732"/><line x1="95" y1="472" x2="1138" y2="472"/></g>
<g stroke="#7e1616" stroke-width="1.4" fill="none">
<line x1="275" y1="472" x2="852" y2="472" stroke-dasharray="7 3 1 2.3"/>
<line x1="355" y1="392" x2="355" y2="552" stroke-dasharray="7 3 1 2.3"/>
</g>
<g stroke="#c01010" stroke-width="1" fill="none"><circle cx="355" cy="472" r="4.8"/><line x1="349.5" y1="472" x2="360.5" y2="472"/><line x1="355" y1="466.5" x2="355" y2="477.5"/></g>
<g stroke="#e8e8e8" fill="none" stroke-width="1.2">
<polygon points="355.00,410.20 301.31,441.20 301.31,503.20 355.00,534.20 408.69,503.20 408.69,441.20"/>
<circle cx="355" cy="472.2" r="54"/>
</g>
<g stroke="#bdbdbd" fill="none" stroke-width="1"><circle cx="355" cy="472.2" r="36.4"/><circle cx="355" cy="472.2" r="34.2"/></g>
<g stroke="#e0e0e0" fill="none" stroke-width="1.2">
<path d="M473.2 409.5 L515.2 409.5 L515.2 534 L473.2 534"/>
<path d="M473.2 440.8 L515.2 440.8 M473.2 503.2 L515.2 503.2"/>
<path d="M473.2 409.5 Q466 425 473.2 440.8 Q464 472 473.2 503.2 Q466 519 473.2 534"/>
<path d="M515.2 436.5 L829.4 436.5 L835.6 442.6 L835.6 501.6 L829.4 507.7 L515.2 507.7"/>
</g>
<g stroke="#a8a8a8" fill="none" stroke-width="1">
<path d="M638 436.5 L667.2 442 L829.4 442 M638 507.7 L667.2 501.6 L829.4 501.6 M667.2 436.5 L667.2 507.7"/>
<path d="M829.4 442 L829.4 501.6" stroke="#6a6a6a"/>
</g>
</svg>
<div id="vscroll" class="a"><div class="a" style="left:5px;top:100px;width:8px;height:342px;border-radius:4px;background:#878787"></div></div>
<div id="hscroll" class="a"><div class="a" style="left:161px;top:5px;width:743px;height:8px;border-radius:4px;background:#878787"></div></div>
<div id="zoomlbl" class="a"><span class="a" style="right:0px;top:1px;font-size:13px;color:#111;white-space:nowrap">10 &lt; 100</span></div>
<div id="cmdhist" class="a"><span class="a" style="left:4px;top:-0.5px;font-size:13px;color:#1515d0;white-space:nowrap;letter-spacing:0.18px"><i>Kommando:</i> dimensionmenu</span></div>
<div id="cmdin" class="a"><span class="a" style="left:1px;top:7px;font-size:13px;color:#111;white-space:nowrap">Kommando:</span><div class="a" style="left:76px;top:5px;width:979px;height:18px;background:#fff"></div><div class="a" style="left:1055px;top:1px;width:26px;height:26px;background:linear-gradient(#ececec,#f4f4f4);border:1px solid #bcbcbc"></div><svg class="a" style="left:1061px;top:9px" width="16" height="13" viewBox="0 0 16 13"><rect x="0.5" y="0.5" width="13.5" height="9.5" fill="#eee" stroke="#222" stroke-width="1"/><rect x="0.5" y="0.5" width="13.5" height="2.6" fill="#000"/><rect x="10.5" y="1" width="1.3" height="1.3" fill="#fff"/></svg></div>
<svg class="a" style="left:1154px;top:108px" width="301" height="691" viewBox="1154 108 301 691">
<defs>
<linearGradient id="gLT" x1="0" y1="0" x2="0" y2="1"><stop offset="0" stop-color="#efefef"/><stop offset="1" stop-color="#dcdcdc"/></linearGradient>
<linearGradient id="gLBt" x1="0" y1="0" x2="0" y2="1"><stop offset="0" stop-color="#e3e3e3"/><stop offset="0.5" stop-color="#f0f0f0"/><stop offset="1" stop-color="#f6f6f6"/></linearGradient>
<g id="eye"><path d="M-7.6 0.2 Q-6.5 -5.6 0 -5.8 Q6.5 -5.6 7.6 0.2 Q5.5 5.6 0 5.8 Q-5.5 5.6 -7.6 0.2 Z" fill="#000"/><ellipse cx="0" cy="0.9" rx="5" ry="3.4" fill="#fff"/><circle cx="0" cy="-0.2" r="3.1" fill="#000"/><circle cx="-0.6" cy="-0.9" r="0.8" fill="#777"/></g>
<g id="lock"><path d="M-3.3 0 L-3.3 -3 Q-3.3 -6.8 0 -6.8 Q3.3 -6.8 3.3 -3 L3.3 0" fill="none" stroke="#b9b9b9" stroke-width="1.6"/><rect x="-4.8" y="-1" width="9.6" height="7.8" fill="#b9b9b9"/></g>
<g id="pen"><path d="M0 0 L1.3 -4 L11 -13.5 L13.5 -11 L3.8 -1.4 Z" fill="#e6a53a" stroke="#8a5a18" stroke-width="0.6"/><path d="M10.2 -12.8 L11 -13.5 Q12.2 -14.3 13.2 -13.3 Q14.2 -12.3 13.5 -11 L12.7 -10.3 Z" fill="#e02020"/><path d="M0 0 L0.8 -2.3 L2.2 -1 Z" fill="#333"/></g>
</defs>
<rect x="1154" y="108" width="301" height="691" fill="#fff"/>
<rect x="1154.5" y="156" width="1" height="643" fill="#d0d0d0"/>
<rect x="1454" y="108" width="1" height="691" fill="#cdcdcd"/>
<rect x="1154" y="108" width="300" height="22" fill="url(#gLT)"/>
<circle cx="1164" cy="118.2" r="7" fill="#6c6c6c"/>
<path d="M1161 115.2 L1167 121.2 M1167 115.2 L1161 121.2" stroke="#fff" stroke-width="1.8"/>
<circle cx="1182" cy="118.2" r="7" fill="#6c6c6c"/>
<rect x="1178.5" y="117.8" width="5.5" height="4" fill="none" stroke="#fff" stroke-width="1"/>
<path d="M1180.5 117.8 L1180.5 114.8 L1186 114.8 L1186 118.8 L1184 118.8" fill="none" stroke="#fff" stroke-width="1"/>
<text x="1322" y="123" font-family="Liberation Sans" font-size="12" fill="#1e1e1e" text-anchor="middle">Layerliste</text>
<!-- buttons -->
<rect x="1155.5" y="130" width="298" height="26" fill="url(#gLBt)"/>
<g stroke="#a9a9a9" stroke-width="1.8" fill="none">
<line x1="1155" y1="131" x2="1454" y2="131"/><line x1="1155" y1="155.6" x2="1454" y2="155.6"/>
<line x1="1155.8" y1="131" x2="1155.8" y2="156"/><line x1="1215" y1="131" x2="1215" y2="156"/><line x1="1275" y1="131" x2="1275" y2="156"/><line x1="1335" y1="131" x2="1335" y2="156"/><line x1="1395" y1="131" x2="1395" y2="156"/><line x1="1453.5" y1="131" x2="1453.5" y2="156"/>
</g>
<use href="#eye" x="1185" y="143"/>
<g opacity="0.4"><use href="#eye" x="1245" y="143"/></g>
<path d="M1303.8 137.2 h2.6 v4.4 h4.6 v2.6 h-4.6 v4.6 h-2.6 v-4.6 h-4.6 v-2.6 h4.6 Z" fill="#ee0000" stroke="#700" stroke-width="0.4"/>
<rect x="1359.2" y="141" width="11.6" height="3.4" fill="#ee0000" stroke="#700" stroke-width="0.4"/>
<use href="#pen" x="1418" y="150"/>
<!-- rows -->
<g stroke="#000" stroke-width="1">
<rect x="1161.5" y="163.5" width="15" height="8" fill="#fff"/>
<rect x="1161.5" y="183.5" width="15" height="8" fill="#0a90ff"/>
<rect x="1161.5" y="203.5" width="15" height="8" fill="#fff"/>
<rect x="1161.5" y="223.5" width="15" height="8" fill="#000"/>
<rect x="1161.5" y="243.5" width="15" height="8" fill="#000"/>
<rect x="1161.5" y="263.5" width="15" height="8" fill="#f00000"/>
</g>
<g font-family="Liberation Sans" font-size="13" fill="#111" letter-spacing="0.2" transform="translate(0 -0.5)">
<text x="1183" y="172">0</text>
<text x="1183" y="192">Bemassungen</text>
<text x="1183" y="212">Defpoints</text>
<text x="1183" y="232">Schmal</text>
<text x="1183" y="252">Sichtbar</text>
<text x="1183" y="272">Zentrum</text>
</g>
<use href="#pen" x="1394.6" y="193.4"/>
<use href="#eye" x="1423" y="166.7"/><use href="#eye" x="1423" y="186.7"/><use href="#eye" x="1423" y="206.7"/><use href="#eye" x="1423" y="226.7"/><use href="#eye" x="1423" y="246.7"/><use href="#eye" x="1423" y="266.7"/>
<use href="#lock" x="1445" y="167"/><use href="#lock" x="1445" y="187"/><use href="#lock" x="1445" y="207"/><use href="#lock" x="1445" y="227"/><use href="#lock" x="1445" y="247"/><use href="#lock" x="1445" y="267"/>
</svg>

<svg class="a" style="left:1455px;top:108px" width="45" height="691" viewBox="1455 108 45 691">
<defs>
<linearGradient id="gDk" x1="0" y1="0" x2="1" y2="0"><stop offset="0" stop-color="#efefef"/><stop offset="0.55" stop-color="#dedede"/><stop offset="0.92" stop-color="#cdcdcd"/><stop offset="1" stop-color="#bdbdbd"/></linearGradient>
<g id="win"><rect x="0.5" y="0.5" width="27" height="27" fill="#fff" stroke="#111" stroke-width="1"/><rect x="0.5" y="0.5" width="27" height="4.8" fill="#000"/><rect x="1.2" y="1.2" width="3.6" height="3.6" fill="#fff"/></g>
</defs>
<rect x="1455" y="108" width="45" height="691" fill="url(#gDk)"/>
<g fill="#a8a8a8"><rect x="1462" y="116" width="2" height="2"/><rect x="1468" y="116" width="2" height="2"/><rect x="1474" y="116" width="2" height="2"/><rect x="1480" y="116" width="2" height="2"/><rect x="1486" y="116" width="2" height="2"/></g>
<rect x="1456.5" y="120" width="43" height="43" rx="5" fill="#b8b8b8"/>
<rect x="1456.5" y="417" width="43" height="43" rx="5" fill="#b8b8b8"/>
<g stroke="#777" stroke-width="1" stroke-dasharray="1 2"><line x1="1458" y1="262" x2="1499" y2="262"/><line x1="1458" y1="409.5" x2="1499" y2="409.5"/></g>
<use href="#win" x="1463" y="127"/>
<path d="M1470.5 139 L1474.5 137.5 L1474.5 149 L1470.5 150.5 Z" fill="#8a8a8a" stroke="#555" stroke-width="0.6"/>
<path d="M1473 138.5 L1476.5 137 L1476.5 148.5 L1473 150 Z" fill="#b0b0b0" stroke="#666" stroke-width="0.5"/>
<path d="M1475.5 137.5 L1484 134.5 L1484 146 L1475.5 149 Z" fill="#f6f6f6" stroke="#777" stroke-width="0.6"/>
<path d="M1478 146 L1481.5 139.5 L1482 145.5 Z" fill="none" stroke="#e03030" stroke-width="0.8"/>
<use href="#win" x="1463" y="174"/>
<rect x="1470" y="184" width="11.5" height="7.8" fill="#f3e6b8" stroke="#7a6a40" stroke-width="0.7"/>
<circle cx="1478.4" cy="191.2" r="5.2" fill="#f3e6b8" fill-opacity="0.8" stroke="#7a6a40" stroke-width="0.7"/>
<use href="#win" x="1463" y="220"/>
<rect x="1468.5" y="229.5" width="17" height="11" rx="2.5" fill="#eef0f4" stroke="#b8c8e0" stroke-width="1"/>
<use href="#win" x="1463" y="276"/>
<g fill="#000"><rect x="1465.8" y="282.2" width="5" height="3.4" rx="0.6"/><rect x="1465.8" y="287.3" width="5" height="3.4" rx="0.6"/><rect x="1465.8" y="292.4" width="5" height="3.4" rx="0.6"/></g>
<g fill="none" stroke="#222" stroke-width="0.7"><rect x="1473" y="282.5" width="14" height="2.8"/><rect x="1473" y="287.5" width="14" height="2.8"/><rect x="1473" y="292.5" width="14" height="2.8"/></g>
<use href="#win" x="1463" y="322"/>
<path d="M1470.5 331.5 Q1477 329.5 1483.5 331.5 L1478.5 338 L1478.5 345 L1476 343.5 L1476 338 Z" fill="#9a9a9a" stroke="#555" stroke-width="0.6"/>
<use href="#win" x="1463" y="368"/>
<path d="M1469.5 375.5 L1469.5 389.5 L1474.5 385 L1474.5 380 Z" fill="#f6f6f6" stroke="#222" stroke-width="0.8"/>
<rect x="1474.5" y="379.5" width="9" height="6" fill="#888" stroke="#444" stroke-width="0.5"/>
<line x1="1467" y1="382.5" x2="1487" y2="382.5" stroke="#f08080" stroke-width="0.8" stroke-dasharray="2 1"/>
<use href="#win" x="1463" y="424"/>
<g fill="#777"><rect x="1466" y="433" width="8" height="1"/><rect x="1466" y="436" width="8" height="1"/><rect x="1466" y="439" width="9" height="1"/><rect x="1466" y="442" width="9" height="1"/></g>
<line x1="1464" y1="446.5" x2="1490" y2="446.5" stroke="#555" stroke-width="0.6"/>
<g fill="#444"><rect x="1466" y="448.5" width="2" height="1.5"/><rect x="1474" y="448.5" width="14" height="1.5"/></g>
<use href="#win" x="1463" y="471"/>
<rect x="1470.5" y="479.5" width="13" height="14" rx="1" fill="#c4862a" stroke="#8e5a14" stroke-width="0.6"/>
<rect x="1472.8" y="481.8" width="8.4" height="9.6" fill="#f4f4f4"/><g fill="#bbb"><rect x="1474" y="484" width="6" height="0.8"/><rect x="1474" y="486" width="6" height="0.8"/><rect x="1474" y="488" width="4" height="0.8"/></g>
<rect x="1474" y="478.5" width="6" height="3" rx="1" fill="#8a8a80"/>
</svg>

<div id="status" class="a">
<span class="st" style="left:2px;top:9px;letter-spacing:0.55px">-48.75,34</span>
<span class="st" style="left:2px;top:29px;letter-spacing:0.55px">@-48.75,34</span>
<div class="a" style="left:253px;top:4px;width:1px;height:40px;background:#8a8a8a"></div>
<span class="st" style="left:256px;top:9px">59.4354&lt;145°</span>
<span class="st" style="left:256px;top:29px">@59.4354&lt;145°</span>
<div class="a" style="left:506px;top:21px;width:7px;height:7px;border-radius:4px;background:#c9c9c9"></div>
<span class="st" style="left:548px;top:19px;letter-spacing:0.33px">Element oder Bereich selektieren</span>
<svg class="a" style="left:716px;top:6px" width="21" height="33" viewBox="0 0 21 33"><path d="M10.5 1 Q19.5 1 19.5 10 L19.5 23 Q19.5 31.5 10.5 31.5 Q1.5 31.5 1.5 23 L1.5 10 Q1.5 1 10.5 1 Z" fill="#fff" stroke="#333" stroke-width="1"/><line x1="1.5" y1="12.5" x2="19.5" y2="12.5" stroke="#333" stroke-width="0.8"/><line x1="10.5" y1="1" x2="10.5" y2="12.5" stroke="#333" stroke-width="0.8"/><rect x="8.5" y="3.5" width="4" height="7" rx="2" fill="#fff" stroke="#333" stroke-width="0.8"/></svg>
<div class="a" style="left:940px;top:21px;width:7px;height:7px;border-radius:4px;background:#c9c9c9"></div>
<span class="st" style="left:949px;top:19px;letter-spacing:0.34px">Keine Objekte selektiert.</span>
<div class="a" style="left:1269px;top:21px;width:7px;height:7px;border-radius:4px;background:#c9c9c9"></div>
</div>
<svg class="a" style="left:0;top:150px" width="130" height="120" viewBox="0 150 130 120">
<defs><radialGradient id="gRing" cx="0.5" cy="0.5" r="0.5">
<stop offset="0" stop-color="#ffffff" stop-opacity="0.10"/>
<stop offset="0.78" stop-color="#e8eef4" stop-opacity="0.18"/>
<stop offset="0.86" stop-color="#a9bccd" stop-opacity="0.45"/>
<stop offset="0.94" stop-color="#8ea6bc" stop-opacity="0.6"/>
<stop offset="1" stop-color="#8ea6bc" stop-opacity="0"/>
</radialGradient></defs>
<circle cx="61" cy="215.8" r="40" fill="url(#gRing)"/>
<path d="M61.3 216 L61.3 237.6 L67.4 232.7 L71.3 241.9 L74.8 241.2 L71.3 231.2 L76.2 230.5 Z" fill="#fff" stroke="#000" stroke-width="1.2" stroke-linejoin="round"/>
</svg>
</body></html>
